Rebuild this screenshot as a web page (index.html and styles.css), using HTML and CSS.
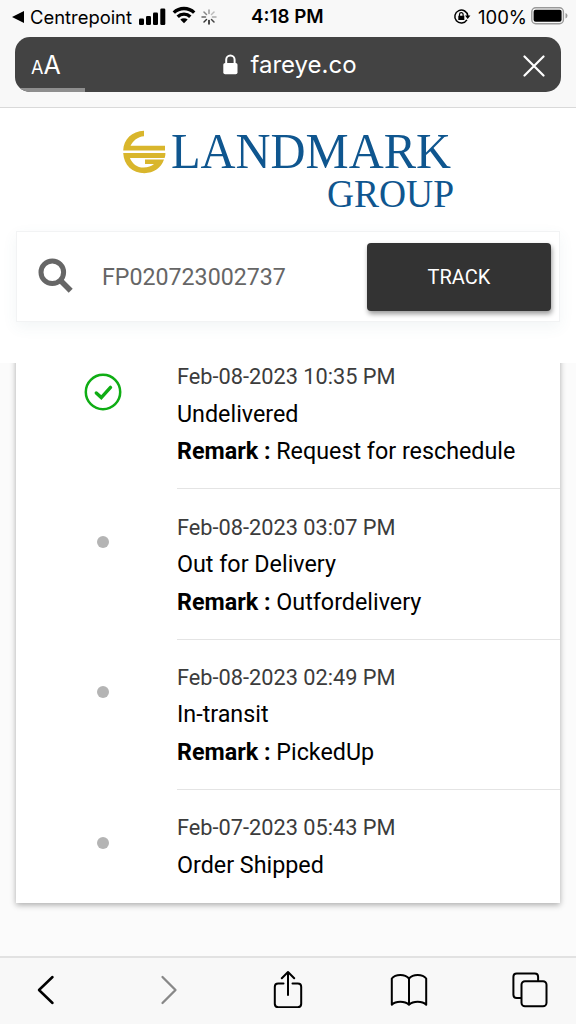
FILE: index.html
```html
<!DOCTYPE html>
<html lang="en">
<head>
<meta charset="utf-8">
<title>Track shipment</title>
<link rel="stylesheet" href="styles.css">
</head>
<body>
<header class="browser">
  <div class="status">
    <div class="status-left">
      <svg class="back-app" width="13" height="12" viewBox="0 0 13 12"><path d="M0 6 12 0v12z"/></svg>
      <span class="carrier">Centrepoint</span>
      <svg class="signal" width="27" height="18" viewBox="0 0 27 18"><rect x="0" y="10.5" width="5" height="6.5" rx="1.3"/><rect x="7" y="8" width="5" height="9" rx="1.3"/><rect x="14" y="4.5" width="5" height="12.5" rx="1.3"/><rect x="21.300" y="0.500" width="5" height="16.500" rx="1.3"/></svg>
      <svg class="wifi" width="24" height="18" viewBox="0 0 24 18"><g fill="none" stroke="#000" stroke-width="3.4"><path d="M1.8 6.600a14.600 14.600 0 0 1 20.400 0"/><path d="M5.700 10.700a9 9 0 0 1 12.600 0"/></g><path d="M12 17.300 8.300 13.600a5.400 5.400 0 0 1 7.400 0z"/></svg>
      <svg class="spinner" width="16" height="16" viewBox="-8 -8 16 16"><g stroke-width="1.500" stroke-linecap="round"><path stroke="#999" d="M0-3.500V-7"/><path stroke="#bbb" d="M2.500-2.500 5-5"/><path stroke="#aaa" d="M3.500 0H7"/><path stroke="#444" d="M2.500 2.500 5 5"/><path stroke="#111" d="M0 3.500V7"/><path stroke="#333" d="M-2.500 2.500-5 5"/><path stroke="#666" d="M-3.500 0H-7"/><path stroke="#888" d="M-2.500-2.500-5-5"/></g></svg>
    </div>
    <div class="clock">4:18 PM</div>
    <div class="status-right">
      <svg class="lock-rotate" width="18" height="17" viewBox="0 0 18 17"><path d="M13.900 11.900A6.500 6.500 0 1 1 14.800 8" fill="none" stroke="#000" stroke-width="1.500"/><path d="M12 7.500h5.400l-2.700 3.400zM5.300 7.700h6v4.200h-6z"/><path d="M6.500 8V6.400a1.800 1.800 0 0 1 3.600 0V8" fill="none" stroke="#000" stroke-width="1.200"/></svg>
      <span class="percent">100%</span>
      <svg class="battery" width="38" height="18" viewBox="0 0 38 18"><rect x=".8" y=".8" width="31.600" height="15.900" rx="4" fill="none" stroke="#999" stroke-width="1.400"/><rect x="2.600" y="2.800" width="28" height="12" rx="2"/><path d="M34.500 6v5.500q2-.8 2-2.750T34.500 6z" fill="#999"/></svg>
    </div>
  </div>
  <div class="address">
    <div class="reader"><span class="small-a">A</span><span class="big-a">A</span></div>
    <div class="site">
      <svg class="padlock" width="15" height="21" viewBox="0 0 15 21"><rect x=".3" y="9" width="14.200" height="11.300" rx="1.800" fill="#fff"/><path d="M3.200 9.500V5.800a4.200 4.200 0 0 1 8.400 0v3.700" fill="none" stroke="#fff" stroke-width="2"/></svg>
      <span>fareye.co</span>
    </div>
    <svg class="close" width="22" height="22" viewBox="0 0 22 22"><path d="m1.500 1.500 19 19m0-19-19 19" fill="none" stroke="#fff" stroke-width="2.200" stroke-linecap="round"/></svg>
    <div class="progress"></div>
  </div>
</header>

<section class="top">
  <svg class="logo" width="350" height="110" viewBox="115 115 350 110">
    <path fill="#d9b62c" d="M144 130.800v5.400c-6.500.6-11 4.300-13.500 9.600H165v4.800H123.200C123.500 139.300 132 131.300 144 130.800zM123.200 153h42.200c0 2-.2 3.500-.8 4.900h-34.700c2.200 5.600 7.200 9.600 13.600 9.600 4.500 0 8-1.300 10.500-3.500h-9v-4.400h19c-2.800 8.300-10.500 13.600-19.600 13.600-12 0-20.600-8-21.200-20.200z"/>
    <text class="logo-text" x="171" y="168.300" font-size="50.500" textLength="280" lengthAdjust="spacingAndGlyphs">LANDMARK</text>
    <text class="logo-text" x="327" y="207" font-size="39" textLength="127" lengthAdjust="spacingAndGlyphs">GROUP</text>
  </svg>
  <div class="search">
    <svg class="magnifier" width="36" height="36" viewBox="0 0 36 36"><circle cx="14.300" cy="14.300" r="11.300" fill="none" stroke="#666" stroke-width="5"/><path d="m22.500 22.500 10.200 10.200" stroke="#666" stroke-width="5.600"/></svg>
    <span class="number">FP020723002737</span>
    <button class="track">TRACK</button>
  </div>
</section>

<main class="page">
  <div class="timeline">
    <article class="event">
      <div class="marker"><svg class="check" width="38" height="38" viewBox="0 0 38 38"><circle cx="19" cy="19" r="17.200" fill="none" stroke="#0fad14" stroke-width="2.500"/><path d="m12.300 20 5 4.600 9.200-10.200" fill="none" stroke="#0fad14" stroke-width="3.400" stroke-linecap="round"/></svg></div>
      <div class="details"><div class="date">Feb-08-2023 10:35 PM</div><div>Undelivered</div><div><b>Remark :</b> Request for reschedule</div></div>
    </article>
    <article class="event">
      <div class="marker"><i class="dot"></i></div>
      <div class="details"><div class="date">Feb-08-2023 03:07 PM</div><div>Out for Delivery</div><div><b>Remark :</b> Outfordelivery</div></div>
    </article>
    <article class="event">
      <div class="marker"><i class="dot"></i></div>
      <div class="details"><div class="date">Feb-08-2023 02:49 PM</div><div>In-transit</div><div><b>Remark :</b> PickedUp</div></div>
    </article>
    <article class="event">
      <div class="marker"><i class="dot"></i></div>
      <div class="details"><div class="date">Feb-07-2023 05:43 PM</div><div>Order Shipped</div></div>
    </article>
  </div>
</main>

<nav class="toolbar">
  <svg width="18" height="30" viewBox="0 0 18 30"><path d="M15.500 2 2 15l13.500 13" fill="none" stroke="#000" stroke-width="2.500" stroke-linecap="round" stroke-linejoin="round"/></svg>
  <svg class="forward" width="18" height="30" viewBox="0 0 18 30"><path d="m2.500 2 13 13-13 13" fill="none" stroke="#888" stroke-width="2.300" stroke-linecap="round" stroke-linejoin="round"/></svg>
  <svg class="share" width="30" height="38" viewBox="0 0 30 38"><path d="M10.500 13.500H5.200q-3.400 0-3.400 3.300v17q0 3.400 3.400 3.400h19.600q3.400 0 3.400-3.400v-17q0-3.300-3.400-3.300h-5.300M15 25V2.200M8.800 8.300 15 2l6.200 6.300" fill="none" stroke="#000" stroke-width="2" stroke-linecap="round" stroke-linejoin="round"/></svg>
  <svg width="38" height="34" viewBox="0 0 38 34"><path d="M19 5.500v26.300M19 5.500C15 .7 5.500.7 1.800 5.500v26.300c4-4 13-4 17.200 0 4.200-4 13.200-4 17.200 0V5.500C32.500.7 23 .7 19 5.500z" fill="none" stroke="#000" stroke-width="2" stroke-linejoin="round"/></svg>
  <svg width="36" height="36" viewBox="0 0 36 36"><path d="M9.500 26H4.700q-3.300 0-3.300-3.300v-18Q1.400 1.400 4.700 1.400h18.100q3.300 0 3.300 3.300v4.600" fill="none" stroke="#000" stroke-width="2"/><rect x="9.500" y="9.300" width="25" height="25" rx="3.500" fill="none" stroke="#000" stroke-width="2"/></svg>
</nav>
</body>
</html>
```

FILE: styles.css
```css
* { box-sizing: border-box; }
body {
  margin: 0;
  width: 576px;
  height: 1024px;
  display: flex;
  flex-direction: column;
  overflow: hidden;
  background: #fff;
  color: #000;
  font-family: Roboto, sans-serif;
}
svg { display: block; flex: none; }

.browser {
  height: 108px;
  flex: none;
  padding: 0 15px;
  background: #f8f8f8;
  border-bottom: 1px solid #d9d9d9;
  font-family: Inter, sans-serif;
}
.status {
  height: 37px;
  display: grid;
  grid-template-columns: 236px 74px 1fr;
  align-items: center;
  margin: 0 -3px;
  padding-bottom: 5px;
  font-size: 18.5px;
  line-height: 32px;
  white-space: nowrap;
}
.status-left, .status-right { display: flex; align-items: center; }
.carrier { width: 108px; margin-left: 5px; font-size: 18.4px; }
.signal { margin-left: 1px; }
.wifi { margin-left: 6px; margin-top: -3px; }
.spinner { margin-left: 5px; }
.clock { margin-left: 3px; padding-top: 1px; font-size: 18.8px; font-weight: 600; }
.status-right { justify-content: flex-end; }
.percent { margin: 0 4px 0 7px; }
.battery { margin-right: -5px; margin-top: -2px; }

.address {
  position: relative;
  height: 55px;
  padding: 0 16px;
  display: flex;
  align-items: center;
  justify-content: space-between;
  overflow: hidden;
  border-radius: 15px;
  background: #434343;
  color: #fff;
}
.reader { width: 50px; display: flex; align-items: baseline; }
.small-a { font-size: 18px; }
.big-a { font-size: 25px; }
.site { display: flex; align-items: center; gap: 12px; margin-left: 4px; font-size: 24px; }
.close { margin: 2px 0 0 28px; }
.progress { position: absolute; left: 0; bottom: 0; width: 70px; height: 4px; background: #8e8e8e; }

.top {
  height: 255px;
  flex: none;
  padding: 7px 15px 0;
}
.logo { margin-left: 100px; }
.logo-text { fill: #0f568f; font-family: "Liberation Serif", serif; }
.search {
  height: 91px;
  margin: 6px 1px 0;
  padding: 0 8px 0 21px;
  display: flex;
  align-items: center;
  border: 1px solid #f2f3f4;
  box-shadow: 0 5px 14px rgba(70, 110, 130, .07);
}
.magnifier { margin-top: -2px; }
.number { width: 265px; margin-left: 28px; color: #666; font-size: 23.2px; }
.track {
  width: 184px;
  height: 68px;
  flex: none;
  padding: 0;
  border: 0;
  border-radius: 4px;
  background: #333;
  box-shadow: 1px 3px 5px rgba(0, 0, 0, .4);
  color: #fff;
  font: 20px Roboto, sans-serif;
}

.page {
  height: 593px;
  flex: none;
  overflow: hidden;
  background: #fbfbfb;
}
.timeline {
  height: 564px;
  margin: -24px 16px 0;
  background: #fff;
  box-shadow: 0 2px 6px rgba(0, 0, 0, .32);
}
.event { height: 150.4px; display: grid; grid-template-columns: 161px 1fr; }
.event:last-child { height: 112px; }
.marker { padding: 46.500px 0 0 81px; }
.marker .check { margin: -13px 0 0 -13px; }
.dot { display: block; width: 12px; height: 12px; border-radius: 50%; background: #b4b4b4; }
.details {
  padding-top: 19.200px;
  border-bottom: 1.500px solid #e4e4e4;
  font-size: 23.3px;
  line-height: 37.5px;
  white-space: nowrap;
}
.event:last-child .details { border: 0; }
.date { color: #3c3c3c; font-size: 21.75px; }

.toolbar {
  flex: none;
  width: 605px;
  height: 68px;
  margin-left: -15px;
  display: grid;
  grid-template-columns: repeat(5, 121px);
  align-items: center;
  justify-items: center;
  background: #f8f8f8;
  border-top: 2px solid #e2e2e2;
}
.toolbar svg { margin-top: -2px; }
.toolbar .share { margin-top: -5px; }
.toolbar .forward { margin-left: 4px; }
```
